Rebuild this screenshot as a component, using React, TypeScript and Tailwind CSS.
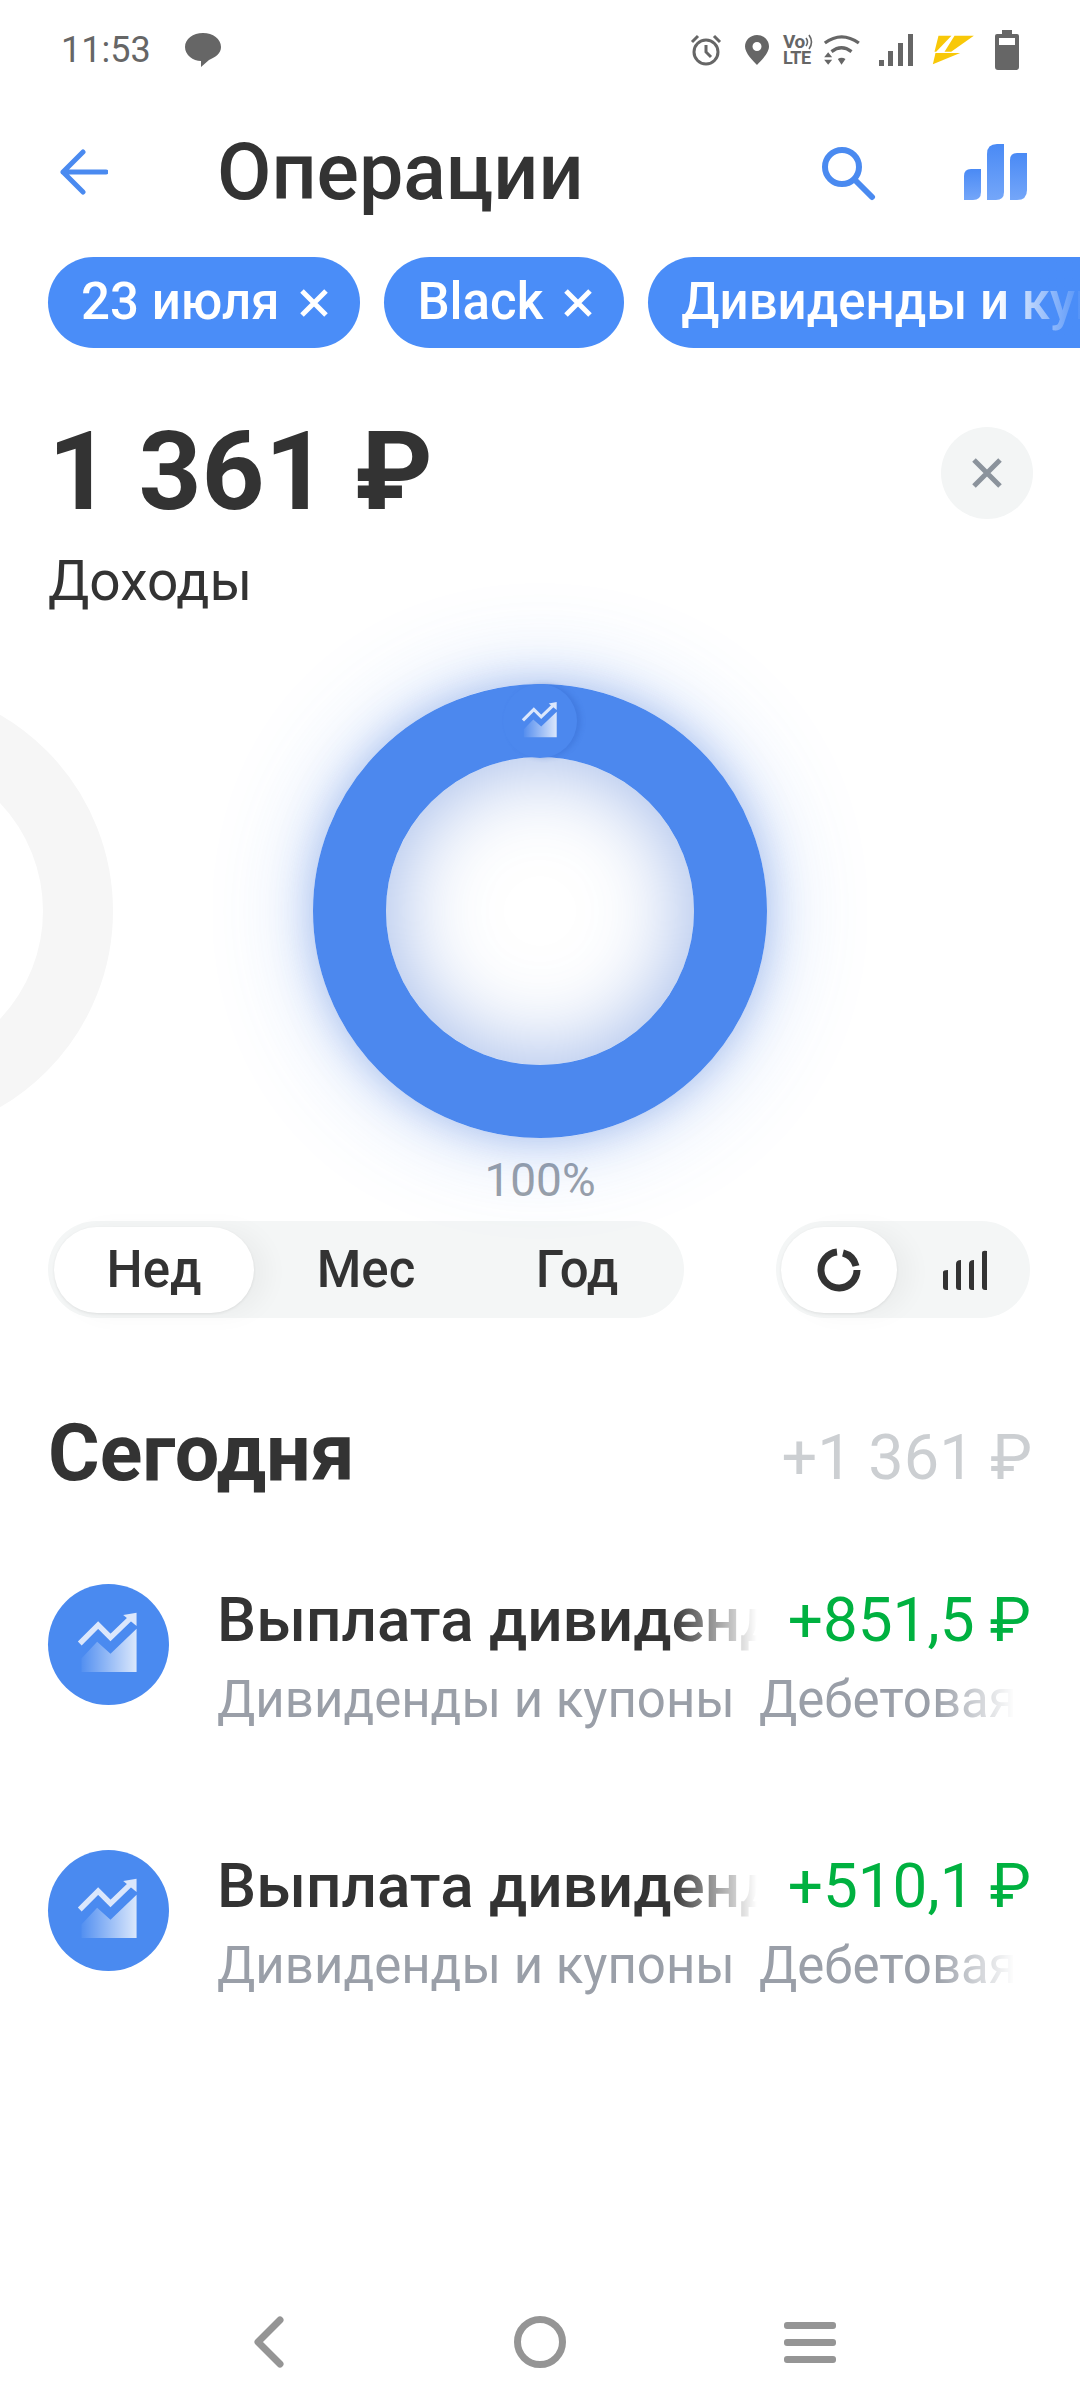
const chips = ["23 июля", "Black"];

const rows = [
  { id: 1, amount: "+851,5 ₽" },
  { id: 2, amount: "+510,1 ₽" },
];

function TrendGlyph({ id }: { id: string }) {
  return (
    <svg viewBox="85 72 362 362" className="h-full w-full">
      <defs>
        <linearGradient id={id} x1="0" x2="1" y1="0" y2="0">
          <stop offset="0" stopColor="#ffffff" stopOpacity="0.05" />
          <stop offset="1" stopColor="#ffffff" stopOpacity="0.8" />
        </linearGradient>
      </defs>
      <path d="M185 335V295L232 245L272 281L350 206V335Z" fill={`url(#${id})`} />
      <path d="M180 250L235 195L272 232L332 174" fill="none" stroke="#dbe7fc" strokeWidth="16" />
      <path d="M310 165L350 158V198Z" fill="#dbe7fc" />
    </svg>
  );
}

function StatusIcons() {
  return (
    <div className="flex items-center text-[#666666]">
      <svg viewBox="0 0 32 32" className="h-[32px] w-[32px]" fill="none" stroke="currentColor" strokeWidth="3">
        <circle cx="16" cy="18" r="12" />
        <path d="M16 11V18L21 23" />
        <path d="M2 8L8 2M30 8L24 2" />
      </svg>
      <svg viewBox="0 0 24 32" className="ml-[23px] h-[32px] w-[24px]" fill="currentColor">
        <path fillRule="evenodd" d="M12 1C5.5 1 0 6 0 12.5C0 19 8 27 12 31C16 27 24 19 24 12.5C24 6 18.5 1 12 1ZM12 8A4.5 4.5 0 1 1 12 17A4.5 4.5 0 0 1 12 8Z" />
      </svg>
      <div className="ml-[14px] flex w-[30px] flex-col font-bold">
        <div className="flex h-[16px] items-center">
          <span className="text-[19px] leading-[16px] tracking-[-0.5px]">Vo</span>
          <svg viewBox="0 0 8 16" className="h-[16px] w-[8px]" fill="none" stroke="currentColor" strokeWidth="1.6">
            <path d="M1 4Q4 8 1 12M4 1Q9 8 4 15" />
          </svg>
        </div>
        <span className="text-[18px] leading-[16px] tracking-[-0.5px]">LTE</span>
      </div>
      <svg viewBox="553 68 110 90" className="ml-[10px] h-[30px] w-[37px]" fill="currentColor">
        <path d="M558 92Q608 55 660 92M578 118Q608 95 638 118" fill="none" stroke="currentColor" strokeWidth="10" />
        <path d="M556 135L568 120L580 135ZM556 142H580L568 157ZM597 140Q608 132 620 140L608 157Z" />
      </svg>
      <svg viewBox="0 0 34 32" className="ml-[19px] h-[32px] w-[34px]" fill="currentColor">
        <rect x="0" y="26" width="5" height="6" />
        <rect x="9" y="17" width="5" height="15" />
        <rect x="19" y="9" width="5" height="23" />
        <rect x="29" y="0" width="5" height="32" />
      </svg>
      <svg viewBox="878 68 128 90" className="ml-[19px] h-[30px] w-[43px]" fill="#f8c808">
        <path d="M897 70H936L890 118H885Z" />
        <path d="M945 70H1003L935 118H915Z" />
        <path d="M888 122H962L880 156Z" />
      </svg>
      <svg viewBox="0 0 24 40" className="ml-[20px] h-[40px] w-[24px]" fill="currentColor">
        <path fillRule="evenodd" d="M7 0H17V4H22A2 2 0 0 1 24 6V37A3 3 0 0 1 21 40H3A3 3 0 0 1 0 37V6A2 2 0 0 1 2 4H7ZM4 8V15H20V8Z" />
      </svg>
    </div>
  );
}

function ChipClose() {
  return (
    <svg viewBox="0 0 34 34" className="h-[34px] w-[34px]" fill="none" stroke="#ffffff" strokeWidth="5">
      <path d="M5 5L29 29M29 5L5 29" />
    </svg>
  );
}

function Row({ id, amount }: { id: number; amount: string }) {
  return (
    <div className="flex h-[121px] items-start">
      <div className="flex h-[121px] w-[121px] shrink-0 rounded-full bg-[#4a8af0]">
        <TrendGlyph id={`row-glyph-${id}`} />
      </div>
      <div className="ml-[48px] flex w-[814px] flex-col pt-[3px]">
        <div className="flex items-center justify-between">
          <div className="w-[540px] overflow-hidden text-[62px] leading-[66px] font-medium whitespace-nowrap text-[#333333] [mask-image:linear-gradient(to_right,black_84%,transparent)]">
            Выплата дивидендов
          </div>
          <div className="text-[62px] leading-[66px] whitespace-nowrap text-[#00b140]">{amount}</div>
        </div>
        <div className="mt-[17px] flex w-[798px] gap-[24px] overflow-hidden text-[51px] leading-[60px] whitespace-nowrap text-[#9a9fa8] [mask-image:linear-gradient(to_right,black_90%,transparent)]">
          <span>Дивиденды и купоны</span>
          <span>Дебетовая карта</span>
        </div>
      </div>
    </div>
  );
}

export default function App() {
  return (
    <div className="flex h-[2400px] w-[1080px] flex-col overflow-hidden bg-white font-[Roboto,sans-serif] text-[#333333]">
      {/* status bar */}
      <div className="flex h-[100px] shrink-0 items-center justify-between pr-[61px] pl-[61px]">
        <div className="flex items-center gap-[34px]">
          <span className="text-[36px] text-[#666666]">11:53</span>
          <svg viewBox="0 0 36 36" className="h-[36px] w-[36px]" fill="#666666">
            <path d="M18 1C8 1 0 7 0 15C0 23 8 29 16 29L16 35L24 28C31 25 36 21 36 15C36 7 28 1 18 1Z" />
          </svg>
        </div>
        <StatusIcons />
      </div>

      {/* header */}
      <div className="flex h-[144px] shrink-0 items-center pr-[53px] pl-[60px]">
        <svg viewBox="0 0 48 46" className="h-[46px] w-[48px]" fill="none" stroke="#4a8af0" strokeWidth="5" strokeLinecap="round" strokeLinejoin="round">
          <path d="M23 3L3 23L23 43M3 23H46" />
        </svg>
        <h1 className="ml-[109px] text-[79px] leading-none font-medium">Операции</h1>
        <svg viewBox="0 0 56 56" className="mt-[2px] mr-[88px] ml-auto h-[56px] w-[56px]" fill="none" stroke="#4a8af0" strokeWidth="6" strokeLinecap="round">
          <circle cx="22" cy="22" r="17" />
          <path d="M35 35L52 52" />
        </svg>
        <svg viewBox="0 0 63 56" className="h-[56px] w-[63px]">
          <defs>
            <linearGradient id="bars" x1="0" x2="0" y1="0" y2="1">
              <stop offset="0" stopColor="#4a8af5" />
              <stop offset="1" stopColor="#74a6f9" />
            </linearGradient>
          </defs>
          <path d="M0 32Q0 25 7 25H17V48Q17 56 9 56H0Z" fill="url(#bars)" />
          <path d="M23 10Q23 0 33 0H40V48Q40 56 32 56H23Z" fill="url(#bars)" />
          <path d="M46 16Q46 9 53 9H63V46Q63 56 53 56H46Z" fill="url(#bars)" />
        </svg>
      </div>

      {/* filter chips */}
      <div className="mt-[13px] flex h-[91px] shrink-0 gap-[24px] overflow-hidden pl-[48px]">
        {chips.map((chip) => (
          <div key={chip} className="flex shrink-0 items-center gap-[18px] rounded-full bg-[#4a8df8] pr-[29px] pl-[33px] text-[51px] font-medium whitespace-nowrap text-white">
            {chip}
            <ChipClose />
          </div>
        ))}
        <div className="relative flex shrink-0 items-center rounded-full bg-[#4a8df8] pr-[33px] pl-[33px] text-[51px] font-medium whitespace-nowrap text-white">
          Дивиденды и купоны
          <div className="absolute top-0 bottom-0 left-[348px] w-[90px] bg-gradient-to-r from-[#4a8df8]/0 to-[#4a8df8]" />
        </div>
      </div>

      {/* total */}
      <div className="mt-[70px] flex shrink-0 items-center justify-between pr-[47px] pl-[48px]">
        <div className="text-[110px] leading-[108px] font-bold">1 361 ₽</div>
        <div className="mt-[2px] flex h-[92px] w-[92px] items-center justify-center rounded-full bg-[#f3f5f5]">
          <svg viewBox="0 0 32 32" className="h-[32px] w-[32px]" fill="none" stroke="#8b939c" strokeWidth="5">
            <path d="M3 3L29 29M29 3L3 29" />
          </svg>
        </div>
      </div>
      <div className="mt-[25px] shrink-0 pl-[48px] text-[55px] leading-[60px]">Доходы</div>

      {/* donut */}
      <div className="relative mt-[73px] flex h-[454px] shrink-0 justify-center">
        <div className="absolute top-0 left-[-341px] h-[454px] w-[454px] rounded-full border-[70px] border-[#f6f6f6]" />
        <div className="relative h-[454px] w-[454px] rounded-full border-[73px] border-[#4c88ee] shadow-[0_0_40px_rgba(60,110,210,0.35),0_0_100px_rgba(76,136,238,0.3),inset_0_0_90px_rgba(60,110,210,0.5)]">
          <div className="absolute top-[-73px] left-[117px] h-[74px] w-[74px] rounded-full bg-[#4c88ee] shadow-[4px_0_5px_rgba(45,95,195,0.3)]">
            <div className="absolute top-[1px] left-[1px] h-[72px] w-[72px]">
              <TrendGlyph id="donut-glyph" />
            </div>
          </div>
        </div>
      </div>
      <div className="mt-[20px] shrink-0 text-center text-[46px] leading-[44px] text-[#9aa0a8]">100%</div>

      {/* period + chart type */}
      <div className="mt-[19px] flex h-[97px] shrink-0 justify-between pr-[50px] pl-[48px]">
        <div className="flex w-[636px] items-center rounded-full bg-[#f4f6f6] pl-[6px]">
          <div className="flex h-[86px] w-[200px] items-center justify-center rounded-full bg-white pt-[2px] text-[51px] font-medium shadow-[0_1px_3px_rgba(0,0,0,0.08),14px_2px_24px_rgba(0,0,0,0.04)]">
            Нед
          </div>
          <div className="w-[224px] pt-[2px] text-center text-[51px] font-medium">Мес</div>
          <div className="w-[198px] pt-[2px] text-center text-[51px] font-medium">Год</div>
        </div>
        <div className="flex w-[254px] items-center rounded-full bg-[#f4f6f6] pl-[5px]">
          <div className="flex h-[86px] w-[116px] items-center justify-center rounded-full bg-white shadow-[0_1px_3px_rgba(0,0,0,0.08),14px_2px_24px_rgba(0,0,0,0.04)]">
            <svg viewBox="0 0 44 44" className="h-[44px] w-[44px]" fill="none" stroke="#333333" strokeWidth="7">
              <path d="M20 4A18 18 0 1 0 40 22" />
              <path d="M26 5A18 18 0 0 1 39 18" />
            </svg>
          </div>
          <svg viewBox="0 0 44 40" className="ml-[46px] h-[40px] w-[44px]" fill="#333333">
            <path d="M0 22Q0 20 5 20V40H3Q0 40 0 37Z" />
            <path d="M13 14Q13 10 18 10V40H16Q13 40 13 37Z" />
            <path d="M26 14Q26 10 31 10V40H29Q26 40 26 37Z" />
            <path d="M39 3Q39 0 44 1V40H42Q39 40 39 37Z" />
          </svg>
        </div>
      </div>

      {/* today */}
      <div className="mt-[95px] flex h-[80px] shrink-0 items-center justify-between pr-[48px] pl-[48px]">
        <div className="text-[79px] leading-[80px] font-bold">Сегодня</div>
        <div className="mt-[10px] text-[63px] leading-[70px] text-[#cccfd2]">+1 361 ₽</div>
      </div>

      <div className="mt-[91px] flex shrink-0 flex-col gap-[145px] pl-[48px]">
        {rows.map((row) => (
          <Row key={row.id} id={row.id} amount={row.amount} />
        ))}
      </div>

      {/* system nav */}
      <div className="mt-auto flex h-[116px] shrink-0 items-center justify-center gap-[218px]">
        <svg viewBox="0 0 52 52" className="h-[52px] w-[52px]" fill="none" stroke="#959595" strokeWidth="7" strokeLinecap="round" strokeLinejoin="round">
          <path d="M36 4L14 26L36 48" />
        </svg>
        <svg viewBox="0 0 52 52" className="h-[52px] w-[52px]" fill="none" stroke="#959595" strokeWidth="7">
          <circle cx="26" cy="26" r="22.5" />
        </svg>
        <svg viewBox="0 0 52 52" className="h-[52px] w-[52px]" fill="#959595">
          <rect x="0" y="6" width="52" height="7" rx="3" />
          <rect x="0" y="23" width="52" height="7" rx="3" />
          <rect x="0" y="40" width="52" height="7" rx="3" />
        </svg>
      </div>
    </div>
  );
}
